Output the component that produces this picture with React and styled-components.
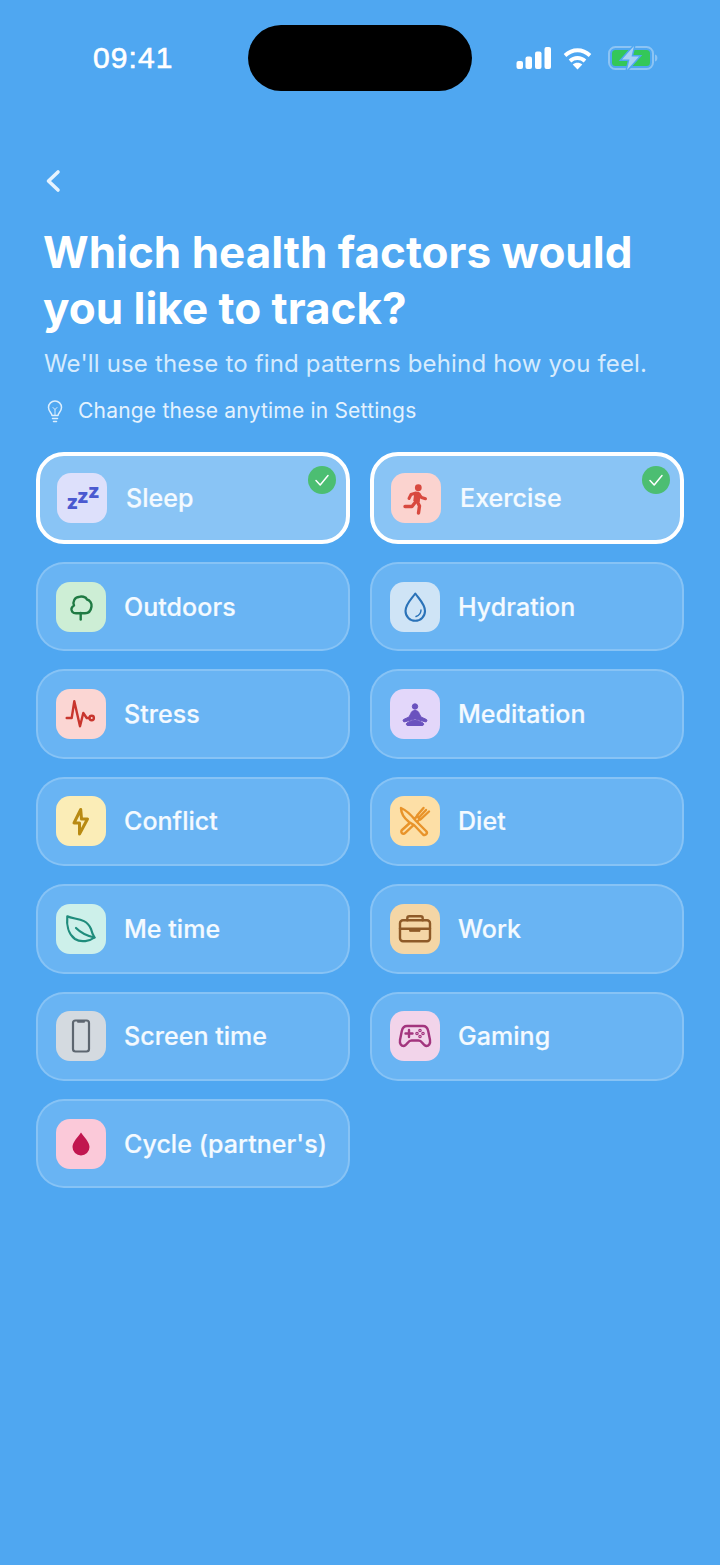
import React from 'react'
import styled, { createGlobalStyle } from 'styled-components'

const GlobalStyle = createGlobalStyle`
  html, body {
    margin: 0;
    padding: 0;
    background: #4fa7f1;
  }
  * {
    box-sizing: border-box;
  }
`

// icons are drawn on the 50x50 tile so coordinates read straight off the picture
const Glyph = ({ color, width = 2, children }) => (
  <svg width="50" height="50" viewBox="0 0 50 50" fill="none" stroke={color} strokeWidth={width} strokeLinecap="round" strokeLinejoin="round">
    {children}
  </svg>
)

const SleepIcon = () => (
  <svg width="50" height="50" viewBox="0 0 50 50" fill="#4a5ad0" fontFamily="Inter, sans-serif" fontWeight="800" fontSize="20">
    <text x="9.5" y="36">z</text>
    <text x="20" y="30">z</text>
    <text x="31" y="25">z</text>
  </svg>
)

const RunnerIcon = () => (
  <Glyph color="#d8493f" width="3.4">
    <circle cx="27.3" cy="14.7" r="3.4" fill="#d8493f" stroke="none" />
    <path d="M26.5 20 25.500 28.500" strokeWidth="6.5" strokeLinecap="butt" />
    <path d="M27 20l3.500 4.500 4 1.200" strokeWidth="3" />
    <path d="M25 20l-5 1.500-2 4" strokeWidth="3" />
    <path d="M24.500 29l-3.500 4.500h-7" />
    <path d="M26.500 29l2 4-1 7" />
  </Glyph>
)

const TreeIcon = () => (
  <Glyph color="#1f7a43" width="2.400">
    <path d="M24.700 31.300H20c-3.500 0-5-2.800-4.500-4.800.5-1.500 1.500-2.500 2.500-3-1.500-3.500.5-8.500 5-8.500 2-1 7-.5 8 2.500 3 .5 5 4 4.500 7-.5 3.500-2.500 6.800-6.500 6.800z" />
    <path d="M24.700 31v6.500" />
  </Glyph>
)

const DropIcon = () => (
  <Glyph color="#2a72b8" width="2.100">
    <path d="M25.300 11.500C29 17 35 22 35 29a9.750 9.750 0 0 1-19.500 0c0-7 6-12 9.800-17.500z" />
    <path d="M31 28c0 3-2 5.500-5 6.500" strokeWidth="1.400" />
  </Glyph>
)

const PulseIcon = () => (
  <Glyph color="#c8352d" width="2.400">
    <path d="M10.700 29h5l2.600-16.700L24 37.300 27.300 24l3.400 5h2.500" />
    <circle cx="35.700" cy="29" r="2.200" />
  </Glyph>
)

const BoltIcon = () => (
  <Glyph color="#b88a12" width="3">
    <path d="M24.700 13.500 18 27h5.500v11l8-15h-6z" />
  </Glyph>
)

const CutleryIcon = () => (
  <Glyph color="#e8932a" width="2.400">
    <path d="M27.500 20 12 34a2 2 0 0 0 3 3.200L30 23" />
    <path d="M27 19.500c1 2 2 3 3.500 4l8.500-8M27 19.500l6.500-7.500M29 21.500l7-7.500" />
    <path d="M11 12c5 2 11 8 15 13l10 10a2 2 0 0 1-3 3.500L24 29l-5-3c-5-4-8-9-8-14z" fill="#fddfa6" />
  </Glyph>
)

const LeafIcon = () => (
  <Glyph color="#1f8c7c" width="2.200">
    <path d="M11.300 12.300C18 16 30 13 35 25c1 4 2 6 3.500 8.500-4.500 3.500-13.500 5.500-19.500 1.500-7-5-8.500-15-7.700-22.700z" />
    <path d="M20 24c5 5 11 8 18.500 9.500" />
  </Glyph>
)

const PhoneIcon = () => (
  <Glyph color="#5d6670" width="2.200">
    <rect x="17" y="9.500" width="16" height="31" rx="2.500" />
    <path d="M22 10.800h6" strokeWidth="2" />
  </Glyph>
)

const BriefcaseIcon = () => (
  <Glyph color="#8e5a28" width="2.400">
    <rect x="10" y="16.300" width="30" height="21" rx="3" />
    <path d="M17.300 16.300v-2c0-1.200.8-2 2-2h11.400c1.200 0 2 .8 2 2v2" />
    <path d="M10 24.700h30" />
    <path d="M20 25.500h10v1.800H20z" fill="#8e5a28" strokeWidth="1" />
  </Glyph>
)

const GamepadIcon = () => (
  <Glyph color="#a3357e" width="2.400">
    <path d="M17 15h16c3 0 4.500 2 5.200 5L40 29c.7 4-1.500 6-3.500 6s-3-1.500-4.500-3.500c-1-1.500-2-2-3.500-2h-7c-1.500 0-2.500.5-3.500 2-1.500 2-2.500 3.500-4.500 3.500s-4.200-2-3.500-6l1.800-9c.7-3 2.200-5 5.200-5z" />
    <path d="M15.500 22.500h7M19 19v7" />
    <circle cx="30" cy="19.500" r=".6" />
    <circle cx="33" cy="22.500" r=".6" />
    <circle cx="30" cy="25.500" r=".6" />
    <circle cx="27" cy="22.500" r=".6" />
  </Glyph>
)

const MeditationIcon = () => (
  <svg width="50" height="50" viewBox="0 0 50 50" fill="#6a52be" stroke="#6a52be" strokeWidth="1" strokeLinejoin="round">
    <circle cx="25" cy="17.500" r="2.700" />
    <path d="M25 21.500c-2.500 0-3.500 1-4.200 3L19 28l-5 2.300a1.300 1.300 0 0 0 .8 2.500L21 31l4-1 4 1 6.200 1.800a1.300 1.300 0 0 0 .8-2.500L31 28l-1.800-3.500c-.7-2-1.700-3-4.200-3z" />
    <path d="M17 34c3-2.200 5.500-2.500 8-2.500s5 .3 8 2.500c1.500 1.200.5 2.500-1 2.500H18c-1.500 0-2.500-1.300-1-2.500z" />
  </svg>
)

const BloodIcon = () => (
  <svg width="50" height="50" viewBox="0 0 50 50" fill="#c1164f">
    <path d="M25 13.500c3 4.500 8.500 9.500 8.500 14.500a8.500 8.500 0 0 1-17 0c0-5 5.500-10 8.500-14.500z" />
  </svg>
)

const factors = [
  { label: 'Sleep', tint: '#dde0fb', icon: <SleepIcon />, selected: true },
  { label: 'Exercise', tint: '#fbd3cf', icon: <RunnerIcon />, selected: true },
  { label: 'Outdoors', tint: '#cdeed5', icon: <TreeIcon /> },
  { label: 'Hydration', tint: '#cfe4f6', icon: <DropIcon /> },
  { label: 'Stress', tint: '#fbd6d3', icon: <PulseIcon /> },
  { label: 'Meditation', tint: '#e3d7fa', icon: <MeditationIcon /> },
  { label: 'Conflict', tint: '#fbedb7', icon: <BoltIcon /> },
  { label: 'Diet', tint: '#fddfa6', icon: <CutleryIcon /> },
  { label: 'Me time', tint: '#cdf0ea', icon: <LeafIcon /> },
  { label: 'Work', tint: '#f4d6a6', icon: <BriefcaseIcon /> },
  { label: 'Screen time', tint: '#d4dae0', icon: <PhoneIcon /> },
  { label: 'Gaming', tint: '#f2d4ea', icon: <GamepadIcon /> },
  { label: "Cycle (partner's)", tint: '#fbc9d9', icon: <BloodIcon /> },
]

export default function App() {
  return (
    <Page>
      <GlobalStyle />
      <StatusBar>
        <Time>09:41</Time>
        <Island />
        <StatusIcons>
          <svg width="36" height="24" viewBox="0 0 36 24" fill="#fff">
            <rect x="0.500" y="15" width="6.500" height="8" rx="2" />
            <rect x="9.500" y="10.500" width="6.500" height="12.500" rx="2" />
            <rect x="19" y="5.500" width="6.500" height="17.500" rx="2" />
            <rect x="28.500" y="1" width="6.500" height="22" rx="2" />
          </svg>
          <svg width="31" height="24" viewBox="0 0 31 24" fill="none" stroke="#fff" strokeWidth="3.800">
            <path d="M3 9.500c7.500-7 17.500-7 25 0" />
            <path d="M8 15c4.300-4 10.700-4 15 0" />
            <path d="M15.500 23.500l-4.800-5c2.700-2.200 6.900-2.200 9.600 0z" fill="#fff" stroke="none" />
          </svg>
          <svg width="50" height="26" viewBox="0 0 50 26">
            <rect x="1" y="2" width="44" height="22" rx="6.500" fill="none" stroke="#8cc4f4" strokeWidth="2" />
            <rect x="4" y="5" width="38" height="16" rx="3.500" fill="#34c759" />
            <path d="M47 9.500c1.600.5 2.400 1.800 2.400 3.500s-.8 3-2.400 3.500z" fill="#8cc4f4" />
            <path d="M26 1 14 14.500h7.500L19 25l12-13.500h-7.500z" fill="#a9d0f6" stroke="#4fa7f1" strokeWidth="3" paintOrder="stroke" />
          </svg>
        </StatusIcons>
      </StatusBar>

      <BackButton aria-label="Back">
        <svg width="16" height="24" viewBox="0 0 16 24" fill="none" stroke="#e6f3fe" strokeWidth="3.600" strokeLinecap="round" strokeLinejoin="round">
          <path d="M13 3 3.500 12 13 21" />
        </svg>
      </BackButton>

      <Header>
        <Title>Which health factors would you like to track?</Title>
        <Subtitle>We'll use these to find patterns behind how you feel.</Subtitle>
        <Tip>
          <svg width="22" height="26" viewBox="0 0 22 26" fill="none" stroke="#dceefd" strokeWidth="1.500" strokeLinecap="round" strokeLinejoin="round">
            <path d="M8 17.500c0-2.500-3.500-4-3.500-8a6.500 6.500 0 0 1 13 0c0 4-3.500 5.500-3.500 8z" />
            <path d="M11 17.500v-6l-2-2M11 11.500l2-2" strokeWidth="1" />
            <path d="M8.500 20.500h5M9.500 23.500h3" />
          </svg>
          Change these anytime in Settings
        </Tip>
      </Header>

      <Grid>
        {factors.map((f) => (
          <Card key={f.label} $selected={f.selected}>
            <IconTile $tint={f.tint}>{f.icon}</IconTile>
            <Label>{f.label}</Label>
            {f.selected && (
              <CheckBadge>
                <svg width="18" height="18" viewBox="0 0 18 18" fill="none" stroke="#fff" strokeWidth="1.500" strokeLinecap="round" strokeLinejoin="round">
                  <path d="M3 9.500 7.200 14 15 4.500" />
                </svg>
              </CheckBadge>
            )}
          </Card>
        ))}
      </Grid>
    </Page>
  )
}

const Page = styled.div`
  width: 720px;
  height: 1565px;
  overflow: hidden;
  background: #4fa7f1;
  padding: 0 36px;
  font-family: Inter, "Liberation Sans", sans-serif;
  color: #fff;
`

const StatusBar = styled.div`
  display: flex;
  align-items: center;
  height: 66px;
  margin-top: 25px;
`

const Time = styled.div`
  width: 212px;
  padding-left: 57px;
  font-family: "Liberation Sans", sans-serif;
  font-size: 30px;
  letter-spacing: 1.1px;
  line-height: 1;
  color: #fff;
  -webkit-text-stroke: 0.6px #fff;
`

const Island = styled.div`
  width: 224px;
  height: 66px;
  border-radius: 33px;
  background: #000;
`

const StatusIcons = styled.div`
  display: flex;
  align-items: center;
  gap: 10px;
  margin-left: 44px;

  svg:last-child {
    margin-left: 5px;
  }
`

const BackButton = styled.div`
  display: flex;
  align-items: center;
  height: 24px;
  margin: 78px 0 0 9px;
`

const Header = styled.div`
  padding-left: 7px;
  margin-top: 31px;
`

const Title = styled.h1`
  margin: 0;
  width: 620px;
  font-size: 44px;
  font-weight: 700;
  line-height: 56px;
  color: #fff;
`

const Subtitle = styled.p`
  margin: 10px 0 0 1px;
  font-size: 24px;
  font-weight: 400;
  line-height: 36px;
  letter-spacing: 0.17px;
  color: #d6ebfd;
`

const Tip = styled.div`
  display: flex;
  align-items: center;
  gap: 12px;
  margin: 15px 0 0 1px;
  font-size: 21px;
  line-height: 28px;
  letter-spacing: 0.2px;
  color: #e4f2fe;
`

const Grid = styled.div`
  display: grid;
  grid-template-columns: 314px 314px;
  column-gap: 20px;
  row-gap: 18px;
  margin-top: 27px;
`

const Card = styled.div`
  position: relative;
  display: flex;
  align-items: center;
  gap: ${(p) => (p.$selected ? '19px' : '18px')};
  height: ${(p) => (p.$selected ? '92px' : '89.4px')};
  padding-left: ${(p) => (p.$selected ? '17px' : '18px')};
  border-radius: 28px;
  border: ${(p) => (p.$selected ? '4px solid #fff' : '2px solid rgba(255, 255, 255, 0.2)')};
  background: ${(p) => (p.$selected ? 'rgba(255, 255, 255, 0.33)' : 'rgba(255, 255, 255, 0.15)')};
`

const IconTile = styled.div`
  display: flex;
  align-items: center;
  justify-content: center;
  flex: none;
  width: 50px;
  height: 50px;
  border-radius: 14px;
  background: ${(p) => p.$tint};
`

const Label = styled.span`
  font-size: 25px;
  font-weight: 500;
  letter-spacing: 0.05px;
  white-space: nowrap;
  color: #f4faff;
  -webkit-text-stroke: 0.2px #f4faff;
`

const CheckBadge = styled.div`
  position: absolute;
  top: 10px;
  right: 10px;
  display: flex;
  align-items: center;
  justify-content: center;
  width: 28px;
  height: 28px;
  border-radius: 50%;
  background: #4cbe72;
`
